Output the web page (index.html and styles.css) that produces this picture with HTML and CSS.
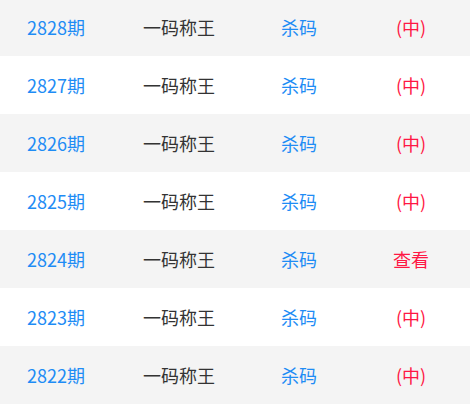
FILE: index.html
```html
<!DOCTYPE html>
<html lang="zh-CN">
<head>
<meta charset="utf-8">
<link rel="stylesheet" href="styles.css">
</head>
<body>
<div class="list">
  <div class="row"><span class="issue">2828期</span><span class="name">一码称王</span><span class="kill">杀码</span><span class="res">(中)</span></div>
  <div class="row"><span class="issue">2827期</span><span class="name">一码称王</span><span class="kill">杀码</span><span class="res">(中)</span></div>
  <div class="row"><span class="issue">2826期</span><span class="name">一码称王</span><span class="kill">杀码</span><span class="res">(中)</span></div>
  <div class="row"><span class="issue">2825期</span><span class="name">一码称王</span><span class="kill">杀码</span><span class="res">(中)</span></div>
  <div class="row"><span class="issue">2824期</span><span class="name">一码称王</span><span class="kill">杀码</span><span class="res">查看</span></div>
  <div class="row"><span class="issue">2823期</span><span class="name">一码称王</span><span class="kill">杀码</span><span class="res">(中)</span></div>
  <div class="row"><span class="issue">2822期</span><span class="name">一码称王</span><span class="kill">杀码</span><span class="res">(中)</span></div>
</div>
</body>
</html>
```
FILE: styles.css
```css
html, body {
  margin: 0;
  padding: 0;
  background: #ffffff;
  overflow: hidden;
}
body {
  font-family: "Noto Sans CJK SC", "Noto Sans", sans-serif;
  font-size: 18px;
}
.list {
  margin-top: -2px;
}
.row {
  display: grid;
  grid-template-columns: 112px 134px 106px 118px;
  align-items: center;
  height: 58px;
  background: #ffffff;
}
.row:nth-child(odd) {
  background: #f4f4f4;
}
.row span {
  justify-self: center;
  line-height: 1;
}
.issue, .kill {
  color: #1e8cf5;
}
.name {
  color: #333333;
}
.res {
  color: #ff1744;
}
```
